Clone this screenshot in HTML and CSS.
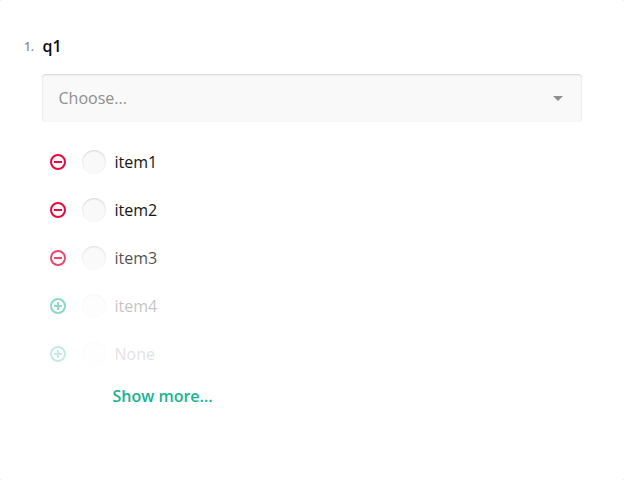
FILE: index.html
```html
<!DOCTYPE html>
<html lang="en">
<head>
<meta charset="utf-8">
<title>Survey</title>
<link rel="stylesheet" href="styles.css">
</head>
<body>
<main class="panel">
  <h5 class="title"><span class="number">1.</span><span>q1</span></h5>
  <div class="dropdown"><span>Choose...</span><svg width="10" height="5" viewBox="0 0 10 5"><path d="M0 0H10L5 5Z"/></svg></div>
  <div class="items">
    <div class="item"><svg class="icon remove" viewBox="0 0 16 16"><circle cx="8" cy="8" r="7"/><path d="M4 8H12"/></svg><i class="radio"></i><span class="label">item1</span></div>
    <div class="item"><svg class="icon remove" viewBox="0 0 16 16"><circle cx="8" cy="8" r="7"/><path d="M4 8H12"/></svg><i class="radio"></i><span class="label">item2</span></div>
    <div class="item fade-75"><svg class="icon remove" viewBox="0 0 16 16"><circle cx="8" cy="8" r="7"/><path d="M4 8H12"/></svg><i class="radio"></i><span class="label">item3</span></div>
    <div class="item fade-50 disabled"><svg class="icon add" viewBox="0 0 16 16"><circle cx="8" cy="8" r="7"/><path d="M4 8H12M8 4V12"/></svg><i class="radio"></i><span class="label">item4</span></div>
    <div class="item fade-25 disabled"><svg class="icon add" viewBox="0 0 16 16"><circle cx="8" cy="8" r="7"/><path d="M4 8H12M8 4V12"/></svg><i class="radio"></i><span class="label">None</span></div>
  </div>
  <div class="more">Show more...</div>
</main>
</body>
</html>
```
FILE: styles.css
```css
* { box-sizing: border-box; }
body { margin: 0; background: #f3f3f3; font: 16px/24px "Open Sans", sans-serif; color: #161616; }
.panel { height: 480px; padding: 34px 42px; background: #fff; border-radius: 4px; }
.title { display: flex; height: 24px; margin: 0 0 16px -18px; font-size: 16px; font-weight: 600; color: #0c0c18; }
.number { width: 18.5px; padding-top: 1px; font-size: 12px; font-weight: 600; color: #909090; }
.dropdown { display: flex; align-items: center; justify-content: space-between; height: 48px; padding: 0 19px 0 16.5px; background: #f9f9f9; border-radius: 4px; box-shadow: inset 0 1px 2px rgba(0,0,0,.15); color: #909090; }
.dropdown svg { fill: #909090; }
.items { padding: 16px 0 0 8px; }
.item { display: flex; align-items: center; height: 48px; }
.icon { width: 16px; height: 16px; fill: none; stroke-width: 2; }
.remove { stroke: #e60a3e; }
.add { stroke: #19b394; }
.radio { width: 24px; height: 24px; margin: 0 8.5px 0 16px; border-radius: 50%; background: #f9f9f9; box-shadow: inset 0 1px 2px rgba(0,0,0,.15); }
.fade-75 { opacity: .75; }
.fade-50 { opacity: .5; }
.fade-25 { opacity: .25; }
.disabled .radio { opacity: .4; }
.disabled .label { opacity: .5; }
.more { padding: 6px 0 0 70.5px; font-weight: 600; color: #19b394; }
```
